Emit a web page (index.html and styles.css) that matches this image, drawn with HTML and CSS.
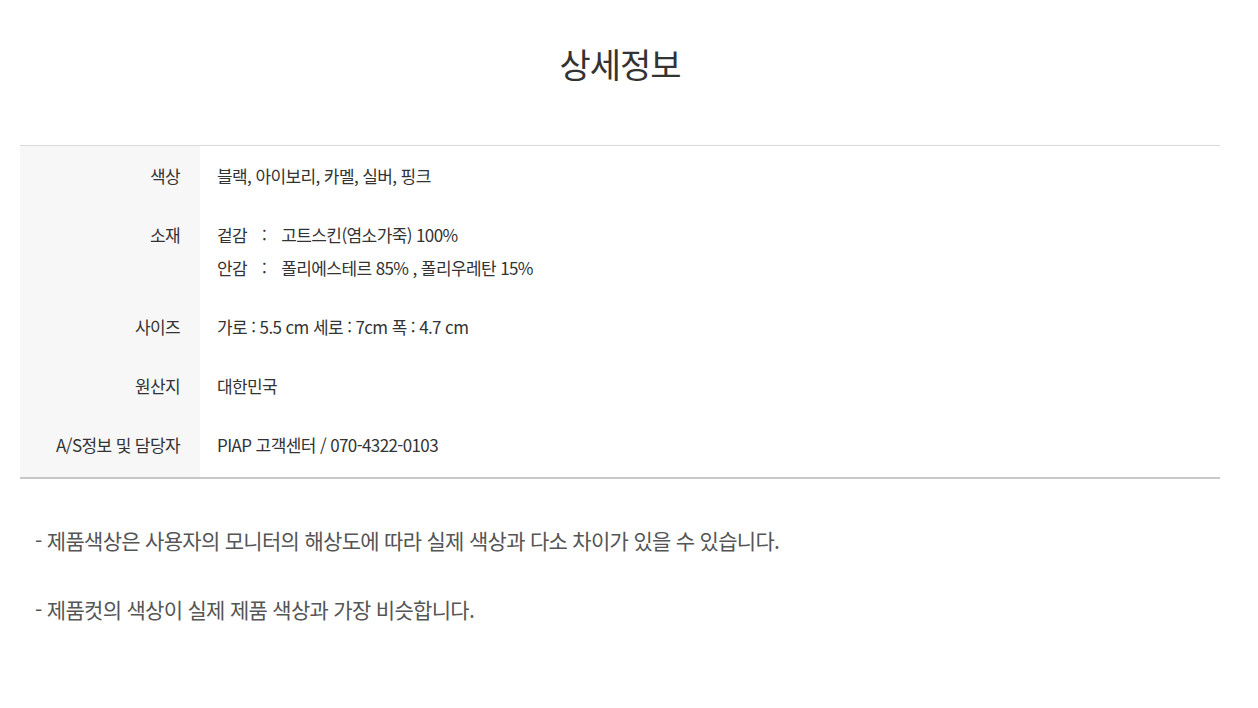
FILE: index.html
```html
<!DOCTYPE html>
<html lang="ko">
<head>
<meta charset="utf-8">
<title>상세정보</title>
<link rel="stylesheet" href="styles.css">
</head>
<body>
<div class="page">
  <h2 class="title">상세정보</h2>
  <div class="info">
    <div class="row">
      <div class="label">색상</div>
      <div class="value">블랙, 아이보리, 카멜, 실버, 핑크</div>
    </div>
    <div class="row">
      <div class="label">소재</div>
      <div class="value">
        <div>겉감<span class="sep">:</span>고트스킨(염소가죽) 100%</div>
        <div>안감<span class="sep">:</span>폴리에스테르 85% , 폴리우레탄 15%</div>
      </div>
    </div>
    <div class="row">
      <div class="label">사이즈</div>
      <div class="value">가로 : 5.5 cm 세로 : 7cm 폭 : 4.7 cm</div>
    </div>
    <div class="row">
      <div class="label">원산지</div>
      <div class="value">대한민국</div>
    </div>
    <div class="row">
      <div class="label">A/S정보 및 담당자</div>
      <div class="value">PIAP 고객센터 / 070-4322-0103</div>
    </div>
  </div>
  <div class="notes">
    <p>- 제품색상은 사용자의 모니터의 해상도에 따라 실제 색상과 다소 차이가 있을 수 있습니다.</p>
    <p>- 제품컷의 색상이 실제 제품 색상과 가장 비슷합니다.</p>
  </div>
</div>
</body>
</html>
```
FILE: styles.css
```css
html, body {
  margin: 0;
  padding: 0;
  background: #fff;
}
body {
  font-family: "Noto Sans CJK KR", "Noto Sans", sans-serif;
  color: #333;
}
.page {
  width: 1200px;
  margin-left: 20px;
}
.title {
  margin: 0;
  padding-top: 39px;
  height: 145px;
  box-sizing: border-box;
  text-align: center;
  font-size: 34px;
  font-weight: 400;
  line-height: 50px;
  letter-spacing: -1px;
  color: #333;
}
.info {
  border-top: 1px solid #dadada;
  border-bottom: 2px solid #c8c8c8;
}
.row {
  display: flex;
  font-size: 17px;
  line-height: 33px;
  letter-spacing: -0.6px;
}
.label {
  width: 180px;
  flex: none;
  box-sizing: border-box;
  background: #f7f7f7;
  text-align: right;
  padding: 13px 20px 13px 0;
  color: #333;
}
.value {
  padding: 13px 0 13px 17px;
  color: #333;
}
.sep {
  margin: 0 15px;
}
.row:last-child .label,
.row:last-child .value {
  padding-bottom: 16px;
}
.notes {
  padding: 47px 15px 0;
  font-size: 21px;
  letter-spacing: -0.7px;
  color: #555;
  line-height: 28px;
}
.notes p {
  margin: 0 0 41px;
}
```
